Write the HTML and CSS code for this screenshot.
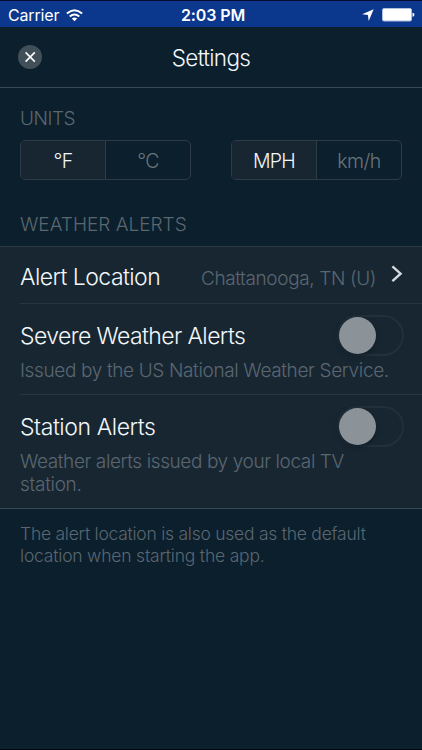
FILE: index.html
```html
<!DOCTYPE html>
<html lang="en">
<head>
<meta charset="utf-8">
<title>Settings</title>
<link rel="stylesheet" href="styles.css">
</head>
<body>
<div class="status">
  <div class="status-left"><span class="carrier">Carrier</span>
    <svg class="wifi" width="17" height="13" viewBox="0 0 17 13"><g fill="none" stroke="#fff" stroke-width="2"><path d="M.9 4.600Q8.500-2 16.100 4.600"/><path d="M3.700 7.600Q8.500 3.400 13.300 7.600"/></g><path d="M5.800 9.500Q8.500 7.300 11.200 9.500L8.500 12.300Z" fill="#fff"/></svg>
  </div>
  <div class="clock">2:03 PM</div>
  <div class="status-right">
    <svg width="12" height="12" viewBox="0 0 12 12"><path d="M11.700.2L6.700 11.900 5.900 6.100.1 5.300Z" fill="#fff"/></svg>
    <svg width="33" height="14" viewBox="0 0 33 14"><rect x=".5" y=".5" width="29" height="12.500" rx="1.500" fill="#fff" stroke="#aebfe2"/><path d="M30.500 4.800Q32.400 5 32.400 6.800T30.500 8.800Z" fill="#fff"/></svg>
  </div>
</div>
<header class="nav">
  <button class="close" aria-label="Close"><svg width="24" height="24" viewBox="0 0 24 24"><path d="M7.600 7.400l9.200 9.200M16.800 7.400l-9.200 9.200" stroke="#fff" stroke-width="1.600"/></svg></button>
  <h1><span class="t-settings">Settings</span></h1>
</header>
<main>
  <h2 class="units"><span class="t-units">UNITS</span></h2>
  <div class="segments">
    <div class="segment"><div class="on"><span class="t-f">°F</span></div><div><span class="t-c">°C</span></div></div>
    <div class="segment"><div class="on"><span class="t-mph">MPH</span></div><div><span class="t-kmh">km/h</span></div></div>
  </div>
  <h2 class="alerts"><span class="t-alerts">WEATHER ALERTS</span></h2>
  <section class="list">
    <div class="row location">
      <span class="label t-location">Alert Location</span>
      <span class="value">Chattanooga, TN (U)</span>
      <svg class="chevron" width="12" height="18" viewBox="0 0 12 18"><path d="M1.400 1.300L9.600 8.700 1.400 16.200" fill="none" stroke="#d5d9dc" stroke-width="2.400"/></svg>
    </div>
    <div class="row severe">
      <div class="line"><span class="label t-severe">Severe Weather Alerts</span><div class="switch"><i></i></div></div>
      <p class="detail"><span class="t-issued">Issued by the US National Weather Service.</span></p>
    </div>
    <div class="row station">
      <div class="line"><span class="label t-station">Station Alerts</span><div class="switch"><i></i></div></div>
      <p class="detail"><span class="t-tv">Weather alerts issued by your local TV</span><br><span class="t-st">station.</span></p>
    </div>
  </section>
  <p class="footer"><span class="t-foot1">The alert location is also used as the default</span><br><span class="t-foot2">location when starting the app.</span></p>
</main>
</body>
</html>
```
FILE: styles.css
```css
* { box-sizing: border-box; }
body {
  margin: 0; height: 750px; overflow: hidden;
  display: flex; flex-direction: column;
  background: #0c1f2c; color: #f2f7fa;
  border-bottom: 1px solid #000612;
  font-family: Inter, "Liberation Sans", sans-serif; font-weight: 300;
}
span { white-space: nowrap; }
h1, h2, p { margin: 0; font-weight: 300; }
.status {
  height: 27px; flex: none; padding: 2px 7px 0 8px; background: #0b378c;
  border-top: 1px solid #020b32; color: #fff;
  display: grid; grid-template-columns: 1fr auto 1fr; align-items: center;
}
.status-left { display: flex; align-items: center; gap: 7px; }
.carrier { font-size: 16px; font-weight: 400; letter-spacing: -.15px; }
.clock { font-size: 16px; font-weight: 600; padding-left: 3px; letter-spacing: -.1px; }
.status-right { display: flex; justify-content: flex-end; align-items: center; gap: 8px; }
.nav {
  height: 61px; flex: none; border-bottom: 1px solid #394a57;
  display: grid; grid-template-columns: 60px 1fr 60px; align-items: center;
}
.close { margin: 0 0 0 18px; padding: 0; width: 24px; height: 24px; border: 0; border-radius: 50%; background: #414f59; }
.close svg { display: block; }
.nav h1 { font-size: 22.5px; text-align: center; line-height: 28px; padding-top: 2px; }
main { flex: 1; }
h2 { font-size: 19px; line-height: 24px; color: #5a6771; padding-left: 20px; }
.units { margin-top: 19px; }
.segments { display: flex; justify-content: space-between; margin: 9px 20px 0; }
.segment { width: 171px; height: 40px; border: 1px solid #2d3b46; border-radius: 5px; display: flex; font-size: 19.5px; color: #69757e; overflow: hidden; }
.segment div { flex: 1; display: flex; align-items: center; justify-content: center; padding-top: 1px; }
.segment .on { background: #182631; border-right: 1px solid #2d3b46; color: #f2f7fa; }
.alerts { margin-top: 33px; }
.list { margin-top: 9px; background: #182631; border-top: 1px solid #2b3945; border-bottom: 1px solid #394955; padding-left: 20px; height: 263px; }
.row + .row { border-top: 1px solid #283641; }
.label { font-size: 23px; line-height: 28px; }
.location { height: 56px; display: flex; align-items: center; padding: 3px 19px 0 0; }
.value { margin-left: auto; font-size: 19px; color: #5a6771; padding-top: 3px; letter-spacing: -.38px; }
.chevron { margin: -5px 0 0 15px; }
.line { display: flex; justify-content: space-between; align-items: center; padding-right: 18px; height: 41px; }
.severe { height: 91px; padding-top: 11px; }
.station { padding-top: 11px; }
.switch { width: 67px; height: 41px; border: 2px solid #22303b; border-radius: 21px; }
.switch i { display: block; width: 37px; height: 37px; border-radius: 50%; background: #8b9298; box-shadow: 0 2px 5px #0f1d27; }
.detail { font-size: 19px; line-height: 23px; color: #5a6771; margin-top: 3px; }
.footer { margin: 14px 0 0 20px; font-size: 17.5px; line-height: 21.500px; color: #5a6771; }
.t-settings { letter-spacing: -.65px; }
.t-units { letter-spacing: -.5px; }
.t-f, .t-c { letter-spacing: -.7px; }
.t-mph { letter-spacing: -.8px; }
.t-kmh { letter-spacing: -.5px; }
.t-location { letter-spacing: -.55px; }
.t-severe { letter-spacing: -.6px; }
.t-station { letter-spacing: -.42px; }
.t-issued { letter-spacing: -.36px; }
.t-tv { letter-spacing: -.4px; }
.t-st { letter-spacing: -.3px; }
.t-foot1 { letter-spacing: -.25px; }
.t-foot2 { letter-spacing: -.2px; }
```
